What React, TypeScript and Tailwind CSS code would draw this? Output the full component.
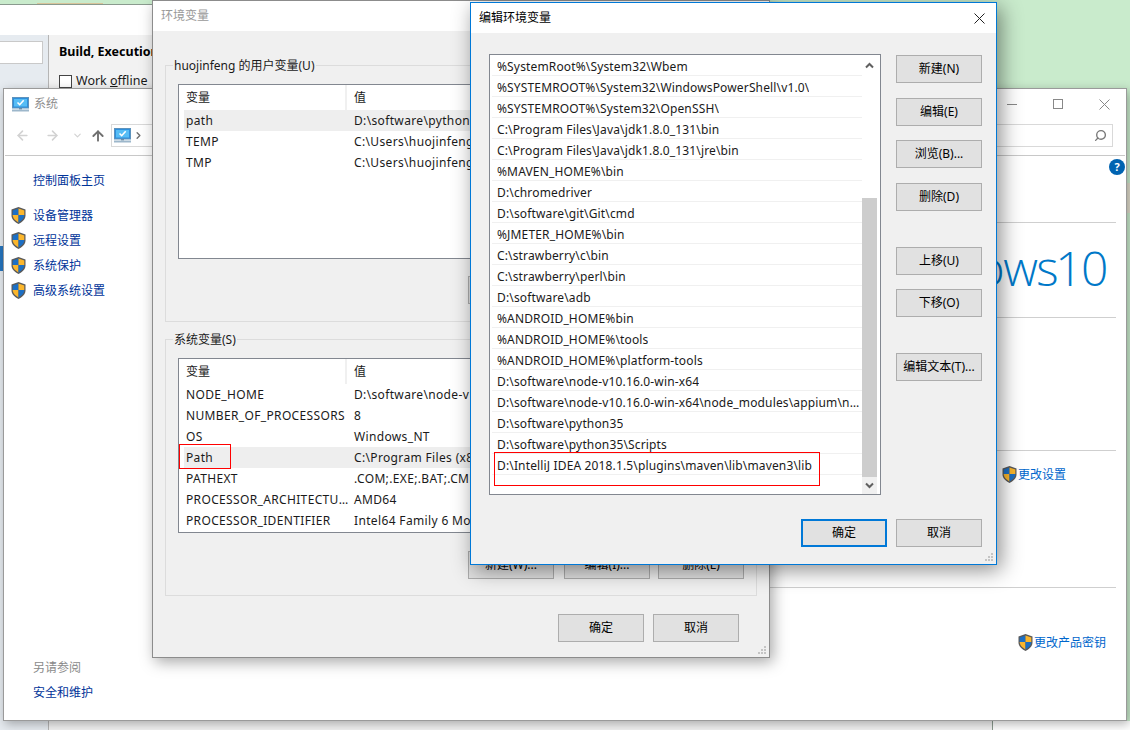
import { ArrowLeft, ArrowRight, ArrowUp, ChevronDown, ChevronRight, Search } from "lucide-react";

const editRows = [
  "%SystemRoot%\\System32\\Wbem",
  "%SYSTEMROOT%\\System32\\WindowsPowerShell\\v1.0\\",
  "%SYSTEMROOT%\\System32\\OpenSSH\\",
  "C:\\Program Files\\Java\\jdk1.8.0_131\\bin",
  "C:\\Program Files\\Java\\jdk1.8.0_131\\jre\\bin",
  "%MAVEN_HOME%\\bin",
  "D:\\chromedriver",
  "D:\\software\\git\\Git\\cmd",
  "%JMETER_HOME%\\bin",
  "C:\\strawberry\\c\\bin",
  "C:\\strawberry\\perl\\bin",
  "D:\\software\\adb",
  "%ANDROID_HOME%bin",
  "%ANDROID_HOME%\\tools",
  "%ANDROID_HOME%\\platform-tools",
  "D:\\software\\node-v10.16.0-win-x64",
  "D:\\software\\node-v10.16.0-win-x64\\node_modules\\appium\\node_modules\\.bin",
  "D:\\software\\python35",
  "D:\\software\\python35\\Scripts",
  "D:\\IntelliJ IDEA 2018.1.5\\plugins\\maven\\lib\\maven3\\lib",
  "",
];

const userVars = [
  ["path", "D:\\software\\python35\\Scripts"],
  ["TEMP", "C:\\Users\\huojinfeng\\AppData\\Local\\Temp"],
  ["TMP", "C:\\Users\\huojinfeng\\AppData\\Local\\Temp"],
];

const sysVars = [
  ["NODE_HOME", "D:\\software\\node-v10.16.0-win-x64"],
  ["NUMBER_OF_PROCESSORS", "8"],
  ["OS", "Windows_NT"],
  ["Path", "C:\\Program Files (x86)\\Common Files"],
  ["PATHEXT", ".COM;.EXE;.BAT;.CMD;.VBS"],
  ["PROCESSOR_ARCHITECTURE", "AMD64"],
  ["PROCESSOR_IDENTIFIER", "Intel64 Family 6 Model 158"],
];

const Shield = () => (
  <svg width="15" height="17" viewBox="0 0 15 17" className="shrink-0">
    <path d="M7.5 0 L14.5 2.5 V8.5 C14.5 12.5 11 15 7.5 17 C4 15 0.5 12.5 0.5 8.5 V2.5 Z" fill="#5a5a5a" />
    <path d="M7.5 1.5 L1.7 3.4 V8 H7.5 Z" fill="#1c6fc4" />
    <path d="M7.5 1.5 L13.3 3.4 V8 H7.5 Z" fill="#fbb62c" />
    <path d="M1.7 8 H7.5 V15.4 C4.5 13.8 1.9 11.6 1.7 8 Z" fill="#fbb62c" />
    <path d="M13.3 8 H7.5 V15.4 C10.5 13.8 13.1 11.6 13.3 8 Z" fill="#1c6fc4" />
  </svg>
);

const PcIcon = () => (
  <svg width="17" height="15" viewBox="0 0 17 15" className="shrink-0">
    <rect x="0.5" y="0.5" width="16" height="10.5" fill="#2f8fdc" stroke="#5d93bd" />
    <rect x="2" y="2" width="13" height="7.5" fill="#56bdf5" />
    <path d="M5.5 5.5 L7.7 7.7 L11.7 3.2" fill="none" stroke="#fff" strokeWidth="1.6" />
    <rect x="7" y="11" width="3" height="1.5" fill="#6d8ea8" />
    <rect x="0" y="12.5" width="17" height="2" fill="#9db7cb" />
  </svg>
);

const Grip = () => (
  <svg width="12" height="12" viewBox="0 0 12 12" className="absolute bottom-0 right-0" fill="#c4c4c4">
    <rect x="7" y="1" width="2" height="2" />
    <rect x="4" y="4" width="2" height="2" />
    <rect x="7" y="4" width="2" height="2" />
    <rect x="1" y="7" width="2" height="2" />
    <rect x="4" y="7" width="2" height="2" />
    <rect x="7" y="7" width="2" height="2" />
  </svg>
);

const Btn = ({ label, primary, className = "" }: { label: string; primary?: boolean; className?: string }) => (
  <div
    className={`w-[86px] h-[28px] shrink-0 flex items-center justify-center bg-[#e1e1e1] text-black ${
      primary ? "border-2 border-[#0078d7]" : "border border-[#adadad]"
    } ${className}`}
  >
    {label}
  </div>
);

const VarTable = ({ rows, active, height }: { rows: string[][]; active: number; height: string }) => (
  <div className={`relative bg-white border border-[#828790] overflow-hidden ${height}`}>
    <div className="flex h-[25px] items-center">
      <div className="w-[168px] h-full pl-[7px] flex items-center border-r-2 border-[#f0f0f0]">变量</div>
      <div className="pl-[7px]">值</div>
    </div>
    {rows.map(([name, value], i) => (
      <div key={name} className={`ml-[5px] flex h-[21px] items-center whitespace-nowrap tracking-[0.35px] ${i === active ? "bg-[#eeeeee]" : ""}`}>
        <div className="w-[168px] pl-[2px] pr-[3px] truncate">{name}</div>
        <div className="pl-[2px]">{value}</div>
      </div>
    ))}
  </div>
);

const GroupBox = ({ title, className, children }: { title: string; className: string; children: React.ReactNode }) => (
  <div className={`relative border border-[#dcdcdc] px-[12px] ${className}`}>
    <div className="absolute -top-[9px] left-[7px] bg-[#f0f0f0] px-[1px] leading-[18px]">{title}</div>
    {children}
  </div>
);

const Rule = () => <div className="h-px bg-[#cfcfcf] mr-[10px] shrink-0" />;

const SideLink = ({ label }: { label: string }) => (
  <div className="flex items-center h-[25px] pl-[7px]">
    <Shield />
    <span className="ml-[7px] text-[#003399]">{label}</span>
  </div>
);

const App = () => {
  return (
    <div className="relative w-[1130px] h-[730px] overflow-hidden bg-[#c9ebcc] text-[12px] text-[#1a1a1a] font-['Noto_Sans','Noto_Sans_CJK_SC',sans-serif]">
      {/* IDE settings window behind everything */}
      <div className="absolute left-0 top-[4px] w-[993px] h-[726px] flex flex-col border-t border-r border-[#8a9a8e] bg-white">
        <div className="h-[30px] shrink-0" />
        <div className="flex-1 flex min-h-0">
          <div className="w-[49px] shrink-0 bg-[#e6ebf0] border-r border-[#b5b5b5] pt-[6px] flex flex-col">
            <div className="w-[43px] h-[23px] bg-white border border-[#c9c9c9] border-l-0" />
            <div className="mt-[182px] h-[25px] bg-[#2675bf]" />
          </div>
          <div className="flex-1 bg-[#f2f2f2] pl-[10px] pt-[8px]">
            <div className="font-bold text-[12.5px] leading-[18px] text-black whitespace-nowrap">Build, Execution, Deployment</div>
            <div className="mt-[11px] flex items-center text-[12.5px]">
              <div className="w-[13px] h-[13px] border border-[#444] bg-white" />
              <span className="ml-[4px]">
                Work <u>o</u>ffline
              </span>
            </div>
          </div>
        </div>
      </div>
      <div className="absolute left-[993px] top-[721px] w-[137px] h-[9px] bg-white" />
      <div className="absolute left-[1127px] top-[183px] w-[3px] h-[30px] bg-[#e0dccb]" />
      <div className="absolute left-[37px] top-[3px] w-[66px] h-px bg-[#d8c49a]" />

      {/* 系统 control panel window */}
      <div className="absolute left-[3px] top-[88px] w-[1124px] h-[633px] flex flex-col bg-white border border-[#9a9a9a] shadow-[2px_3px_10px_rgba(0,0,0,0.3)]">
        <div className="h-[30px] flex items-center shrink-0 pl-[8px]">
          <PcIcon />
          <span className="ml-[5px] text-[#8e8e8e]">系统</span>
          <div className="ml-auto -mr-px flex h-full">
            <div className="w-[46px] flex items-center justify-center">
              <div className="w-[10px] h-px bg-[#888]" />
            </div>
            <div className="w-[46px] flex items-center justify-center">
              <div className="w-[10px] h-[10px] border border-[#888]" />
            </div>
            <div className="w-[46px] flex items-center justify-center">
              <svg width="11" height="11" viewBox="0 0 11 11" stroke="#888">
                <path d="M0.5 0.5 L10.5 10.5 M10.5 0.5 L0.5 10.5" />
              </svg>
            </div>
          </div>
        </div>
        <div className="h-[37px] flex items-start shrink-0 pt-[5px] pl-[10px] pr-[12px] border-b border-[#c8c8c8] mx-[1px]">
          <div className="h-[23px] flex items-center">
            <ArrowLeft size={15} strokeWidth={2.5} className="text-[#d2d2d2]" />
            <ArrowRight size={15} strokeWidth={2.5} className="ml-[15px] text-[#d2d2d2]" />
            <ChevronDown size={11} strokeWidth={2.5} className="ml-[12px] text-[#d2d2d2]" />
            <ArrowUp size={16} strokeWidth={2.8} className="ml-[7px] text-[#6f6f6f]" />
          </div>
          <div className="ml-[5px] w-[770px] h-[23px] border border-[#d9d9d9] flex items-center pl-[2px]">
            <PcIcon />
            <ChevronRight size={11} strokeWidth={3} className="ml-[2px] text-[#6f6f6f]" />
          </div>
          <div className="ml-[8px] flex-1 h-[23px] border border-[#d9d9d9] flex items-center justify-end pr-[5px]">
            <Search size={13} strokeWidth={2.5} className="-scale-x-100 text-[#777]" />
          </div>
        </div>
        <div className="flex-1 flex min-h-0">
          <div className="w-[500px] shrink-0 flex flex-col pb-[18px]">
            <div className="pl-[29px] mt-[16px] text-[#003399]">控制面板主页</div>
            <div className="mt-[13px]">
              <SideLink label="设备管理器" />
              <SideLink label="远程设置" />
              <SideLink label="系统保护" />
              <SideLink label="高级系统设置" />
            </div>
            <div className="mt-auto pl-[29px] text-[#8a8a8a]">另请参阅</div>
            <div className="mt-[7px] pl-[29px] text-[#003399]">安全和维护</div>
          </div>
          <div className="flex-1 flex flex-col min-w-0">
            <div className="h-[66px] shrink-0 flex justify-end pt-[3px] pr-px">
              <div className="w-[16px] h-[16px] rounded-full bg-[#0063b1] text-white font-bold text-[11px] leading-[16px] text-center">?</div>
            </div>
            <Rule />
            <div className="h-[94px] shrink-0 flex items-center justify-end pr-[19px] pb-[4px] whitespace-nowrap font-['Open_Sans',sans-serif] font-light text-[48px] leading-none tracking-[-1.5px] [word-spacing:-13px] text-[#0078c8]">
              Windows 10
            </div>
            <Rule />
            <div className="h-[132px] shrink-0" />
            <Rule />
            <div className="h-[136px] shrink-0 flex justify-end items-start pt-[15px] pr-[60px] text-[#0066cc]">
              <Shield />
              <span className="ml-px">更改设置</span>
            </div>
            <Rule />
            <div className="flex justify-end items-start pt-[46px] pr-[20px] text-[#0066cc]">
              <Shield />
              <span className="ml-px">更改产品密钥</span>
            </div>
          </div>
        </div>
      </div>

      {/* 环境变量 dialog */}
      <div className="absolute left-[152px] top-0 w-[618px] h-[658px] flex flex-col bg-[#f0f0f0] border border-[#8c8c8c] shadow-[3px_4px_14px_rgba(0,0,0,0.35)]">
        <div className="h-[30px] bg-white shrink-0 flex items-center pl-[8px] text-[#999]">环境变量</div>
        <div className="relative flex-1 flex flex-col px-[12px] pt-[34px]">
          <GroupBox title="huojinfeng 的用户变量(U)" className="h-[257px] pt-[18px]">
            <VarTable rows={userVars} active={0} height="h-[175px]" />
            <div className="mt-[17px] flex justify-end gap-[8px]">
              <Btn label="新建(N)..." className="mr-[2px]" />
              <Btn label="编辑(E)..." />
              <Btn label="删除(D)" />
            </div>
          </GroupBox>
          <GroupBox title="系统变量(S)" className="mt-[17px] h-[257px] pt-[18px]">
            <VarTable rows={sysVars} active={3} height="h-[175px]" />
            <div className="mt-[18px] flex justify-end gap-[8px]">
              <Btn label="新建(W)..." className="mr-[2px]" />
              <Btn label="编辑(I)..." />
              <Btn label="删除(L)" />
            </div>
          </GroupBox>
          <div className="mt-[18px] flex justify-end gap-[9px] pr-[18px]">
            <Btn label="确定" />
            <Btn label="取消" />
          </div>
          <div className="absolute left-[26px] top-[413px] w-[52px] h-[25px] border border-[#ff0000]" />
          <Grip />
        </div>
      </div>

      {/* 编辑环境变量 dialog */}
      <div className="absolute left-[470px] top-[2px] w-[527px] h-[563px] flex flex-col bg-[#f0f0f0] border border-[#0078d7] shadow-[4px_5px_20px_rgba(0,0,0,0.45)]">
        <div className="h-[30px] bg-white shrink-0 flex items-center justify-between pl-[8px] pr-[11px] text-black">
          编辑环境变量
          <svg width="11" height="11" viewBox="0 0 11 11" stroke="#222">
            <path d="M0.5 0.5 L10.5 10.5 M10.5 0.5 L0.5 10.5" />
          </svg>
        </div>
        <div className="relative flex-1 flex flex-col pl-[18px] pr-[14px] pt-[21px]">
          <div className="flex">
            <div className="relative w-[392px] h-[441px] bg-white border border-[#828790] flex overflow-hidden">
              <div className="w-[372px] pl-[2px]">
                {editRows.map((row) => (
                  <div key={row} className="h-[21px] pl-[5px] pr-[2px] pt-[3px] flex items-center border-b border-[#f0f0f0] last:border-b-0 whitespace-nowrap tracking-[0.15px]">
                    <span className="truncate">{row}</span>
                  </div>
                ))}
              </div>
              <div className="w-[15px] flex flex-col">
                <div className="h-[143px] flex justify-center pt-[7px]">
                  <svg width="9" height="7" viewBox="0 0 9 7" fill="none" stroke="#606060" strokeWidth="2">
                    <path d="M1 5.5 L4.5 2 L8 5.5" />
                  </svg>
                </div>
                <div className="h-[279px] bg-[#cdcdcd]" />
                <div className="flex-1 bg-[#f0f0f0] flex justify-center pt-[5px]">
                  <svg width="9" height="7" viewBox="0 0 9 7" fill="none" stroke="#606060" strokeWidth="2">
                    <path d="M1 1.5 L4.5 5 L8 1.5" />
                  </svg>
                </div>
              </div>
              <div className="absolute left-[4px] top-[397px] w-[326px] h-[34px] border border-[#ff0000]" />
            </div>
            <div className="ml-[15px] flex flex-col pt-px">
              <Btn label="新建(N)" />
              <Btn label="编辑(E)" className="mt-[15px]" />
              <Btn label="浏览(B)..." className="mt-[14px]" />
              <Btn label="删除(D)" className="mt-[15px]" />
              <Btn label="上移(U)" className="mt-[36px]" />
              <Btn label="下移(O)" className="mt-[14px]" />
              <Btn label="编辑文本(T)..." className="mt-[36px]" />
            </div>
          </div>
          <div className="mt-[24px] flex justify-end gap-[9px]">
            <Btn label="确定" primary />
            <Btn label="取消" />
          </div>
          <Grip />
        </div>
      </div>
    </div>
  );
};

export default App;
